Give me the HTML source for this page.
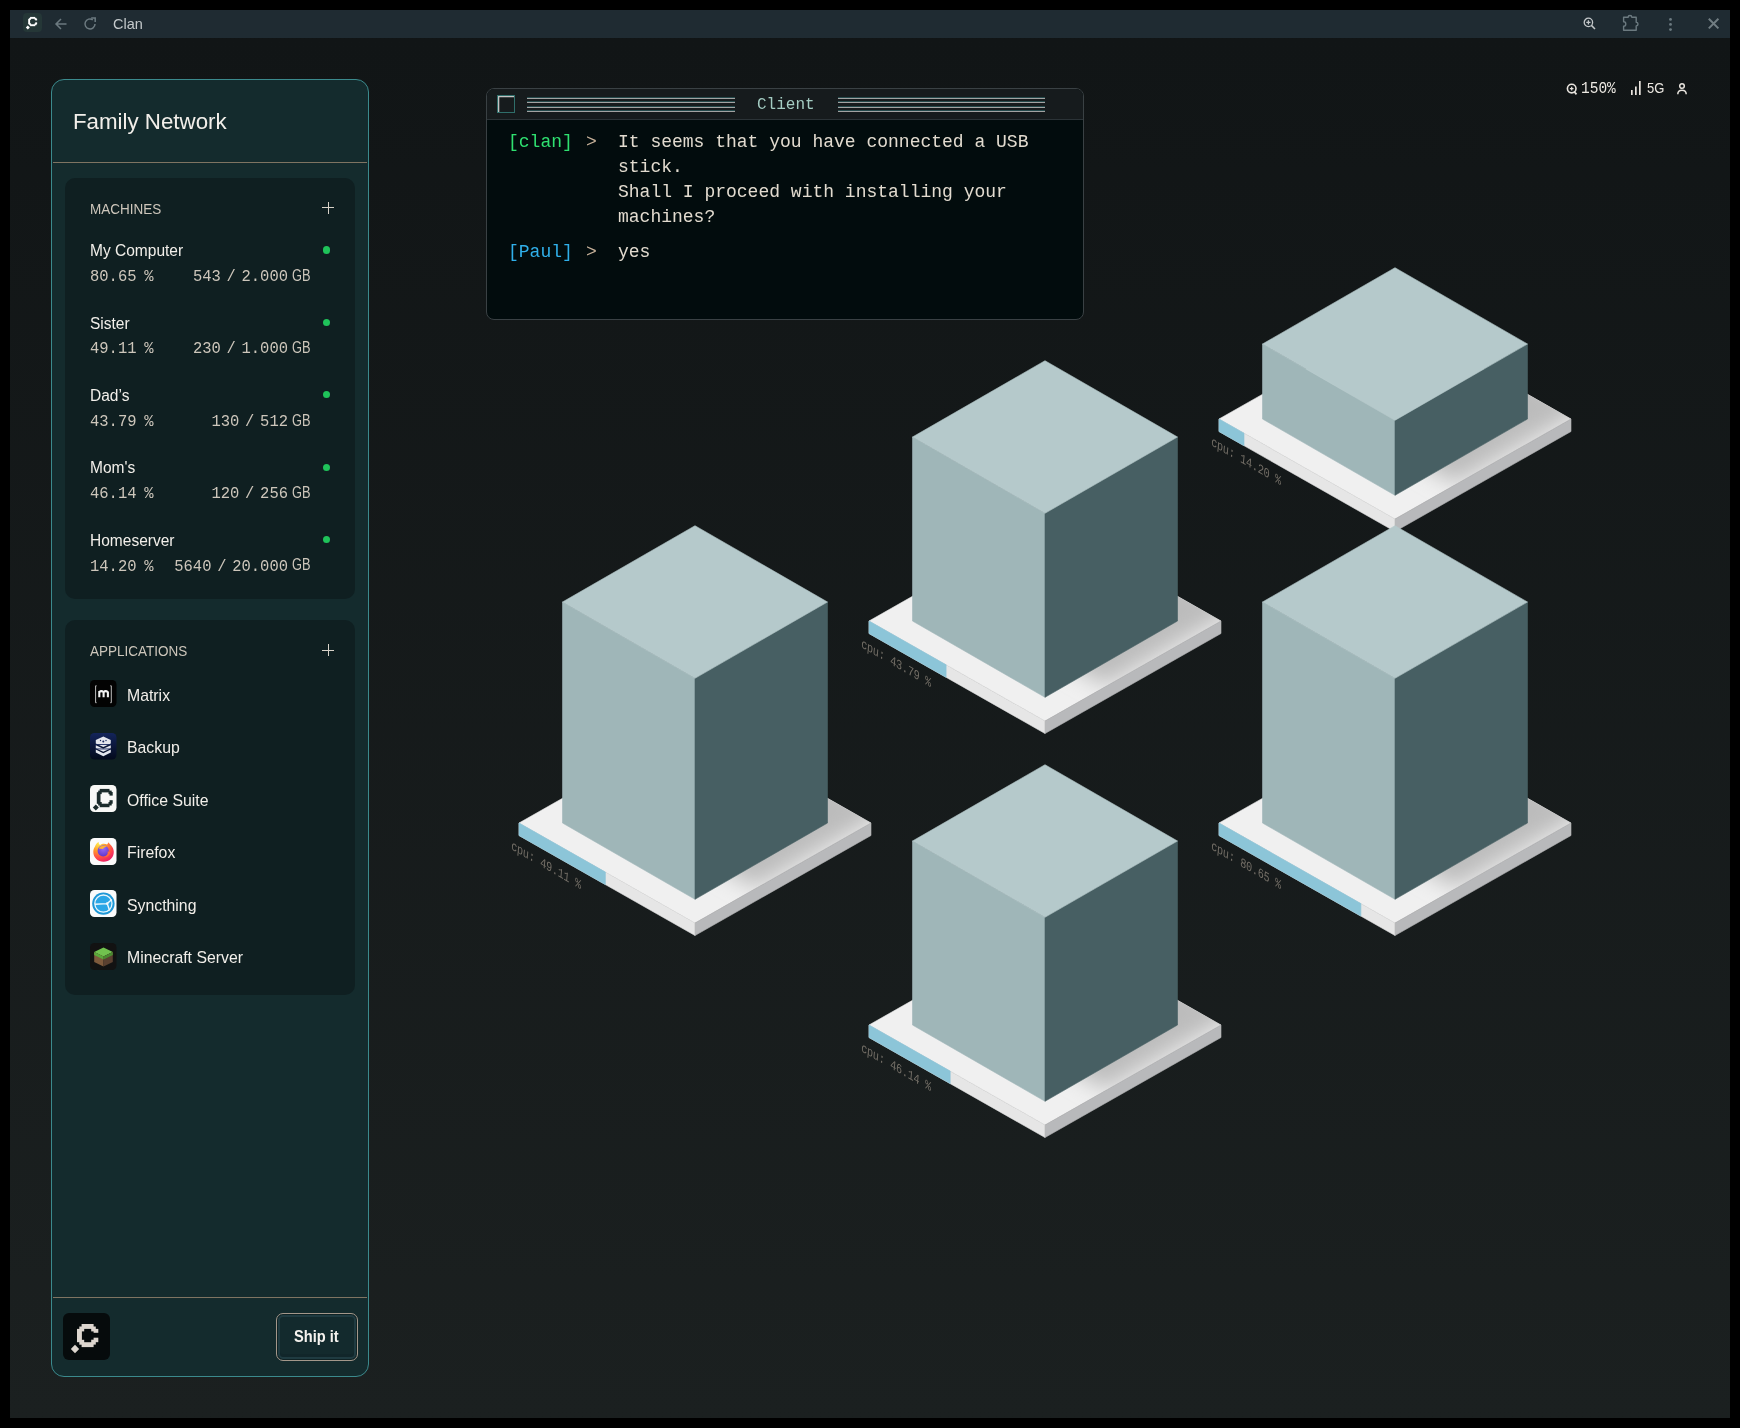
<!DOCTYPE html>
<html><head><meta charset="utf-8">
<style>
*{box-sizing:border-box;margin:0;padding:0}
html,body{width:1740px;height:1428px;overflow:hidden;background:#000;-webkit-font-smoothing:antialiased;font-family:"Liberation Sans",sans-serif}
.abs{position:absolute}
#win{position:absolute;will-change:transform;left:10px;top:10px;width:1720px;height:1408px;background:linear-gradient(#101415 0,#111516 30px,#1b2020 1408px);overflow:hidden}
#tb{position:absolute;left:0;top:0;width:1720px;height:28px;background:#1f2b32}
.mono{font-family:"Liberation Mono",monospace}
#side{position:absolute;left:41px;top:69px;width:318px;height:1298px;background:#142b2d;border:1px solid #3b8a8d;border-radius:13px}
.card{position:absolute;left:13px;width:290px;background:#0f1f21;border-radius:10px}
.t{position:absolute;white-space:nowrap;line-height:1}
.nm{font-size:16px;color:#f2efea;transform:scaleX(0.97);transform-origin:0 0}
.num{font-size:15.5px;color:#cdc6bb;transform:scaleY(1.06);transform-origin:0 100%}
.gb{font-size:16px;color:#cdc6bb;transform:scaleX(0.8);transform-origin:0 0}
.dot{position:absolute;width:7.2px;height:7.2px;border-radius:50%;background:#1fc35a}
.ico{position:absolute;width:27px;height:27px}
.ico svg{display:block}
.sec{font-size:15px;color:#cdc6bb;transform:scaleX(0.9);transform-origin:0 0}
.an{font-size:17px;transform:scaleX(0.93)}
.plus{position:absolute;width:12px;height:12px}
.plus:before,.plus:after{content:"";position:absolute;background:#d8d2c8}
.plus:before{left:5.5px;top:0;width:1.3px;height:12px}
.plus:after{left:0;top:5.5px;width:12px;height:1.3px}
#term{position:absolute;left:476px;top:78px;width:598px;height:231.5px;background:#020c0d;border:1.6px solid #3a4144;border-radius:8px;overflow:hidden}
#termtb{position:absolute;left:0;top:0;width:100%;height:31px;background:#161b1d;border-bottom:1.5px solid #2b3337}
.stripes{position:absolute;top:7.8px;height:16px;background:linear-gradient(#24494b 0,#24494b 1px,#a2a2a2 1px,#a2a2a2 2.2px,transparent 2.2px,transparent 4.1px,#24494b 4.1px,#24494b 5.1px,#a2a2a2 5.1px,#a2a2a2 6.3px,transparent 6.3px,transparent 9.1px,#24494b 9.1px,#24494b 10.1px,#a2a2a2 10.1px,#a2a2a2 11.3px,transparent 11.3px,transparent 13.1px,#24494b 13.1px,#24494b 14.1px,#a2a2a2 14.1px,#a2a2a2 15.3px,transparent 15.3px)}
.tl{position:absolute;font-family:"Liberation Mono",monospace;font-size:18px;line-height:25px;white-space:pre;color:#e2dbcf}
</style></head><body>
<div id="win">
  <div id="tb">
    <div class="abs" style="left:13px;top:3px;width:18.5px;height:18.5px;background:#253737;border-radius:4px"></div>
    <svg class="abs" style="left:15px;top:5px" width="15" height="15" viewBox="0 0 47 47"><g fill="#fff"><rect x="16" y="6" width="16" height="6"/><rect x="16" y="29" width="16" height="6"/><rect x="10" y="12" width="6" height="17"/><rect x="13" y="9" width="6" height="6"/><rect x="13" y="26" width="6" height="6"/><rect x="30" y="9" width="6" height="6"/><rect x="32" y="12" width="6" height="5"/><rect x="30" y="26" width="6" height="6"/><rect x="32" y="23" width="6" height="6"/><path d="M8.8 33L15 39.2 8.8 45.4 2.6 39.2z"/></g></svg>
    <svg class="abs" style="left:44px;top:7px" width="14" height="14" viewBox="0 0 14 14"><path d="M12.5 7H2M7 2L2 7l5 5" stroke="#6c7a80" stroke-width="1.5" fill="none"/></svg>
    <svg class="abs" style="left:73px;top:7px" width="14" height="14" viewBox="0 0 14 14"><path d="M12 7A5 5 0 1 1 9.8 2.8" stroke="#6c7a80" stroke-width="1.5" fill="none"/><path d="M8.2 1h4v4" stroke="#6c7a80" stroke-width="1.5" fill="none"/></svg>
    <div class="t" style="left:103px;top:6.8px;font-size:14.5px;color:#c4c9cb">Clan</div>
    <svg class="abs" style="left:1573px;top:7px" width="14" height="14" viewBox="0 0 14 14"><circle cx="5.4" cy="5.4" r="4.2" stroke="#c4c8ca" stroke-width="1.3" fill="none"/><path d="M8.4 8.4l3.6 3.6" stroke="#c4c8ca" stroke-width="1.5"/><path d="M5.4 3.3v4.2M3.3 5.4h4.2" stroke="#c4c8ca" stroke-width="1.3"/></svg>
    <svg class="abs" style="left:1611px;top:4px" width="20" height="18" viewBox="0 0 20 18"><path d="M2.6 3.3H7.2A1.8 1.8 0 0 1 10.8 3.3H15.2V8.3A1.8 1.8 0 0 1 15.2 11.9V16.3H2.6V12.2A2.2 2.2 0 0 0 2.6 7.8z" stroke="#6c7a80" stroke-width="1.4" fill="none" stroke-linejoin="round"/></svg>
    <svg class="abs" style="left:1657px;top:7px" width="8" height="16" viewBox="0 0 8 16"><circle cx="3.5" cy="2.4" r="1.4" fill="#6c7a80"/><circle cx="3.5" cy="7.4" r="1.4" fill="#6c7a80"/><circle cx="3.5" cy="12.6" r="1.4" fill="#6c7a80"/></svg>
    <svg class="abs" style="left:1697px;top:7px" width="14" height="14" viewBox="0 0 14 14"><path d="M1.8 1.8l9.6 9.6M11.4 1.8l-9.6 9.6" stroke="#717d82" stroke-width="2"/></svg>
  </div>

  <!-- status -->
  <svg class="abs" style="left:1555.8px;top:73px" width="13" height="13" viewBox="0 0 13 13"><circle cx="5.7" cy="5.6" r="4.3" stroke="#e8e4de" stroke-width="1.6" fill="none"/><path d="M8 8.5l2.5 2.8" stroke="#e8e4de" stroke-width="1.8"/><path d="M5.7 3.8v3.6M3.9 5.6h3.6" stroke="#e8e4de" stroke-width="1.2"/></svg>
  <div class="t mono" style="left:1571px;top:70.5px;font-size:14.5px;color:#ece8e2;transform:scaleY(1.08);transform-origin:0 0">150%</div>
  <svg class="abs" style="left:1620px;top:70px" width="12" height="16" viewBox="0 0 12 16"><rect x="1" y="10" width="1.7" height="5" fill="#e8e4de"/><rect x="5" y="6.5" width="1.7" height="8.5" fill="#e8e4de"/><rect x="9" y="1" width="1.7" height="14" fill="#e8e4de"/></svg>
  <div class="t" style="left:1637px;top:69.8px;font-size:15.5px;color:#ece8e2;transform:scaleX(0.84);transform-origin:0 0">5G</div>
  <svg class="abs" style="left:1666px;top:72px" width="12" height="13" viewBox="0 0 12 13"><circle cx="6" cy="4" r="2.3" stroke="#e8e4de" stroke-width="1.5" fill="none"/><path d="M1.8 12.2q0-4 4.2-4t4.2 4" stroke="#e8e4de" stroke-width="1.5" fill="none"/></svg>

  <div id="side">
    <div class="t" style="left:21px;top:30.7px;font-size:22.3px;color:#f2efea">Family Network</div>
    <div class="abs" style="left:1px;top:82px;width:314px;height:1px;background:#7f7462"></div>
    <div class="card" style="top:98px;height:421px">
    </div>
    <div class="t sec" style="left:38px;top:120.5px">MACHINES</div>
    <div class="plus" style="left:270px;top:121.5px"></div>
<div class="t nm" style="left:38px;top:163.2px">My Computer</div>
<div class="t num mono" style="left:38px;top:189.9px;word-spacing:-1.6px">80.65 %</div>
<div class="t num mono" style="right:80px;top:189.9px;word-spacing:-3.6px">543 / 2.000</div>
<div class="t gb" style="left:240px;top:187.7px">GB</div>
<div class="dot" style="left:270.8px;top:166.4px"></div>
<div class="t nm" style="left:38px;top:235.6px">Sister</div>
<div class="t num mono" style="left:38px;top:262.3px;word-spacing:-1.6px">49.11 %</div>
<div class="t num mono" style="right:80px;top:262.3px;word-spacing:-3.6px">230 / 1.000</div>
<div class="t gb" style="left:240px;top:260.1px">GB</div>
<div class="dot" style="left:270.8px;top:238.8px"></div>
<div class="t nm" style="left:38px;top:308.0px">Dad’s</div>
<div class="t num mono" style="left:38px;top:334.7px;word-spacing:-1.6px">43.79 %</div>
<div class="t num mono" style="right:80px;top:334.7px;word-spacing:-3.6px">130 / 512</div>
<div class="t gb" style="left:240px;top:332.5px">GB</div>
<div class="dot" style="left:270.8px;top:311.2px"></div>
<div class="t nm" style="left:38px;top:380.4px">Mom's</div>
<div class="t num mono" style="left:38px;top:407.1px;word-spacing:-1.6px">46.14 %</div>
<div class="t num mono" style="right:80px;top:407.1px;word-spacing:-3.6px">120 / 256</div>
<div class="t gb" style="left:240px;top:404.9px">GB</div>
<div class="dot" style="left:270.8px;top:383.6px"></div>
<div class="t nm" style="left:38px;top:452.8px">Homeserver</div>
<div class="t num mono" style="left:38px;top:479.5px;word-spacing:-1.6px">14.20 %</div>
<div class="t num mono" style="right:80px;top:479.5px;word-spacing:-3.6px">5640 / 20.000</div>
<div class="t gb" style="left:240px;top:477.3px">GB</div>
<div class="dot" style="left:270.8px;top:456.0px"></div>
    <div class="card" style="top:540px;height:375px"></div>
    <div class="t sec" style="left:38px;top:562.5px">APPLICATIONS</div>
    <div class="plus" style="left:270px;top:564px"></div>
<div class="ico" style="left:38px;top:600.1px"><svg width="27" height="27" viewBox="0 0 27 27"><rect x="0" y="0" width="26.5" height="27" rx="4.5" fill="#030303"/><path d="M6.6 5.8h-1v16.9h1M20.3 5.8h1v16.9h-1" stroke="#bdbdbd" stroke-width="1" fill="none"/><path d="M9.3 17.3V10.9M9.3 12.2q2-2 4.3 0V17.3M13.6 12.2q2-2 4.3 0V17.3" stroke="#f2f2f2" stroke-width="2.1" fill="none"/></svg></div>
<div class="t nm an" style="left:75px;top:606.5px">Matrix</div>
<div class="ico" style="left:38px;top:652.6px"><svg width="27" height="27" viewBox="0 0 27 27"><defs><linearGradient id="bg1" x1="0" y1="0" x2="0" y2="1"><stop offset="0" stop-color="#13245a"/><stop offset="1" stop-color="#040a1c"/></linearGradient></defs><rect width="26.5" height="26.5" rx="4.5" fill="url(#bg1)"/><g fill="#e4e6ee"><path d="M13.3 3.5l7.5 3.6v3.3l-7.5 3.6-7.5-3.6V7.1z"/><path d="M5.8 12.2l7.5 3.6 7.5-3.6v3l-7.5 3.6-7.5-3.6z"/><path d="M5.8 16.6l7.5 3.6 7.5-3.6v3l-7.5 3.6-7.5-3.6z"/></g><g fill="#1a2a60"><circle cx="13.3" cy="8.6" r="1"/><circle cx="10.5" cy="7.5" r="0.7"/><circle cx="16" cy="7.5" r="0.7"/><rect x="5.8" y="11.1" width="15" height="0.9"/><rect x="5.8" y="15.5" width="15" height="0.9"/></g></svg></div>
<div class="t nm an" style="left:75px;top:659.0px">Backup</div>
<div class="ico" style="left:38px;top:705.1px"><svg width="27" height="27" viewBox="0 0 27 27"><rect width="26.5" height="27" rx="4.5" fill="#f8f8f6"/><g fill="#1b2b2b"><rect x="9.7" y="3.9" width="9.8" height="3.5"/><rect x="9.7" y="18.7" width="9.8" height="3.5"/><rect x="6.8" y="7.2" width="3.7" height="11.6"/><rect x="8.2" y="5.6" width="3.5" height="3.5"/><rect x="8.2" y="17" width="3.5" height="3.5"/><rect x="18.5" y="5.6" width="3.2" height="3.5"/><rect x="19.5" y="7" width="3.2" height="3.6"/><rect x="18.5" y="17" width="3.2" height="3.5"/><rect x="19.5" y="15.2" width="3.2" height="3.5"/><path d="M5.8 25.6l3-3.1-3-3.1-3 3.1z"/></g></svg></div>
<div class="t nm an" style="left:75px;top:711.5px">Office Suite</div>
<div class="ico" style="left:38px;top:757.6px"><svg width="27" height="27" viewBox="0 0 27 27"><defs><radialGradient id="ff1" cx="0.25" cy="0.1" r="1"><stop offset="0" stop-color="#ffe84a"/><stop offset="0.35" stop-color="#ff9a2a"/><stop offset="0.7" stop-color="#ff4a4a"/><stop offset="1" stop-color="#e8186a"/></radialGradient><radialGradient id="ff2" cx="0.5" cy="0.3" r="0.8"><stop offset="0" stop-color="#9a6af4"/><stop offset="1" stop-color="#5a30c8"/></radialGradient></defs><rect width="26.5" height="27" rx="4.5" fill="#fbfbfb"/><path d="M5 8.5c.8-2 2-3.6 3.6-4.5 0 1.5.6 2.5 1.5 3 1.8-1.5 4.6-1.8 7-.6l1.6-2.2c.4 1.3 1.6 2.2 2.5 3.2 1.6 1.8 2.6 4 2.6 6.6 0 5.6-4.5 9.8-10.2 9.8S3.3 19.6 3.3 14c0-2 .6-4 1.7-5.5z" fill="url(#ff1)"/><circle cx="13.2" cy="12.8" r="5.6" fill="url(#ff2)"/><path d="M8.6 10.6c1.5-3 5.5-4 8.4-1.5-1.8 0-3.4.6-4 1.8z" fill="#ffb030"/><path d="M17.6 13.5c.6 2.6-.8 5-3.6 5.6 3.2.6 6.2-1.8 6.3-5z" fill="#ff6a3a"/></svg></div>
<div class="t nm an" style="left:75px;top:764.0px">Firefox</div>
<div class="ico" style="left:38px;top:810.1px"><svg width="27" height="27" viewBox="0 0 27 27"><rect width="26.5" height="27" rx="4.5" fill="#fbfbfb"/><circle cx="13.4" cy="13.6" r="11.2" fill="#1e97d6"/><circle cx="13.4" cy="13.6" r="8.6" fill="#2aa6e6" stroke="#e8f6fc" stroke-width="1.3"/><path d="M4.9 14.2L17.2 13.6 21.8 9.5M17.2 13.6L19.6 20.6" stroke="#eef8fd" stroke-width="1.4" fill="none"/><circle cx="17.2" cy="13.6" r="1.3" fill="#eef8fd"/></svg></div>
<div class="t nm an" style="left:75px;top:816.5px">Syncthing</div>
<div class="ico" style="left:38px;top:862.6px"><svg width="27" height="27" viewBox="0 0 27 27"><rect width="26.5" height="27" rx="4.5" fill="#121212"/><path d="M13.5 4.5l9.3 4.4-9.3 4.6-9.3-4.6z" fill="#71c24e"/><path d="M4.2 8.9l9.3 4.6v10l-9.3-4.6z" fill="#7e5a3c"/><path d="M22.8 8.9l-9.3 4.6v10l9.3-4.6z" fill="#5a4030"/><path d="M4.2 8.9l9.3 4.6v3l-9.3-4.6z" fill="#5aa83a"/><path d="M22.8 8.9l-9.3 4.6v3l9.3-4.6z" fill="#4a8a30"/></svg></div>
<div class="t nm an" style="left:75px;top:869.0px">Minecraft Server</div>
    <div class="abs" style="left:1px;top:1217px;width:314px;height:1px;background:#7f7462"></div>
    <div class="abs" style="left:11px;top:1233px"><svg width="47" height="47" viewBox="0 0 47 47"><rect width="47" height="47" rx="6" fill="#060b0c"/><g fill="#ddd6cf">
<rect x="18.6" y="11" width="12" height="4.9"/><rect x="18.6" y="29.2" width="12" height="4.9"/><rect x="14" y="15.9" width="4.9" height="13.3"/>
<rect x="16.3" y="13.5" width="4.9" height="4.9"/><rect x="16.3" y="26.8" width="4.9" height="4.9"/>
<rect x="28.2" y="13.5" width="4.6" height="4.9"/><rect x="30.6" y="15.9" width="4.7" height="3.9"/>
<rect x="28.2" y="26.7" width="4.6" height="4.9"/><rect x="30.6" y="24.7" width="4.7" height="4.5"/>
<path d="M12 31.8L16.2 36 12 40.2 7.8 36z"/></g></svg></div>
    <div class="abs" style="left:224px;top:1233px;width:82px;height:48px;border:1.3px solid #a3978a;border-radius:7px;background:#132a2d;box-shadow:inset 0 0 0 1px #0f2224,inset 0 0 0 3px #1f3b41,inset 0 -3px 0 3px #11262a"></div>
    <div class="t" style="left:242px;top:1248px;font-size:17px;font-weight:bold;color:#f5f2ee;transform:scaleX(0.86);transform-origin:0 0">Ship it</div>
  </div>

  <div id="term">
    <div id="termtb">
      <div class="abs" style="left:9.7px;top:5.5px;width:18px;height:18px;border:1.2px solid #2f6e6a;box-shadow:inset 1.3px 1.3px 0 #c4c4c4"></div>
      <div class="stripes" style="left:39.5px;width:208px"></div>
      <div class="stripes" style="left:351px;width:207px"></div>
      <div class="t mono" style="left:270px;top:8px;font-size:16px;color:#a4cdc3">Client</div>
    </div>
    <div class="tl" style="left:21px;top:41px;color:#2fe070">[clan]</div>
    <div class="tl" style="left:99px;top:41px;color:#c9b39b">&gt;</div>
    <div class="tl" style="left:131px;top:41px">It seems that you have connected a USB
stick.
Shall I proceed with installing your
machines?</div>
    <div class="tl" style="left:21px;top:151px;color:#30b0ea">[Paul]</div>
    <div class="tl" style="left:99px;top:151px;color:#c9b39b">&gt;</div>
    <div class="tl" style="left:131px;top:151px">yes</div>
  </div>
</div>
<svg class="abs" style="left:0;top:0" width="1740" height="1428" viewBox="0 0 1740 1428">
<defs><filter id="blur" x="-50%" y="-50%" width="200%" height="200%"><feGaussianBlur stdDeviation="11"/></filter>
<clipPath id="cp0"><polygon points="1219.0,419.0 1395.0,319.0 1571.0,419.0 1395.0,519.0"/></clipPath>
<clipPath id="cp1"><polygon points="869.0,621.0 1045.0,521.0 1221.0,621.0 1045.0,721.0"/></clipPath>
<clipPath id="cp2"><polygon points="519.0,823.0 695.0,723.0 871.0,823.0 695.0,923.0"/></clipPath>
<clipPath id="cp3"><polygon points="1219.0,823.0 1395.0,723.0 1571.0,823.0 1395.0,923.0"/></clipPath>
<clipPath id="cp4"><polygon points="869.0,1025.0 1045.0,925.0 1221.0,1025.0 1045.0,1125.0"/></clipPath>
</defs>
<g stroke-width="0.6"><polygon points="1219.0,419.0 1395.0,319.0 1571.0,419.0 1395.0,519.0" fill="#f0f0f0" stroke="#f0f0f0"/><g clip-path="url(#cp0)"><polygon points="1455.0,330.7 1587.5,407.0 1455.0,483.3 1322.5,407.0" fill="#bcbcbc" filter="url(#blur)"/></g><polygon points="1219.0,419.0 1395.0,519.0 1395.0,531.5 1219.0,431.5" fill="#e6e6e6" stroke="#e6e6e6"/><polygon points="1219.0,419.0 1244.0,433.2 1244.0,445.7 1219.0,431.5" fill="#8cc5d8" stroke="#8cc5d8"/><polygon points="1395.0,519.0 1571.0,419.0 1571.0,431.5 1395.0,531.5" fill="#b8b9bb" stroke="#b8b9bb"/><polygon points="1262.5,344.0 1395.0,420.3 1395.0,495.3 1262.5,419.0" fill="#9fb6b8" stroke="#9fb6b8"/><polygon points="1395.0,420.3 1527.5,344.0 1527.5,419.0 1395.0,495.3" fill="#475f63" stroke="#475f63"/><polygon points="1395.0,267.7 1527.5,344.0 1395.0,420.3 1262.5,344.0" fill="#b5c9cb" stroke="#b5c9cb"/><text transform="matrix(0.866 0.5 -0.1 1.12 1211.0 445.0)" font-family="Liberation Mono" font-size="11.6" fill="#736e66" letter-spacing="-0.25">cpu: 14.20 %</text></g>
<g stroke-width="0.6"><polygon points="869.0,621.0 1045.0,521.0 1221.0,621.0 1045.0,721.0" fill="#f0f0f0" stroke="#f0f0f0"/><g clip-path="url(#cp1)"><polygon points="1105.0,532.7 1237.5,609.0 1105.0,685.3 972.5,609.0" fill="#bcbcbc" filter="url(#blur)"/></g><polygon points="869.0,621.0 1045.0,721.0 1045.0,733.5 869.0,633.5" fill="#e6e6e6" stroke="#e6e6e6"/><polygon points="869.0,621.0 946.1,664.8 946.1,677.3 869.0,633.5" fill="#8cc5d8" stroke="#8cc5d8"/><polygon points="1045.0,721.0 1221.0,621.0 1221.0,633.5 1045.0,733.5" fill="#b8b9bb" stroke="#b8b9bb"/><polygon points="912.5,437.0 1045.0,513.3 1045.0,697.3 912.5,621.0" fill="#9fb6b8" stroke="#9fb6b8"/><polygon points="1045.0,513.3 1177.5,437.0 1177.5,621.0 1045.0,697.3" fill="#475f63" stroke="#475f63"/><polygon points="1045.0,360.7 1177.5,437.0 1045.0,513.3 912.5,437.0" fill="#b5c9cb" stroke="#b5c9cb"/><text transform="matrix(0.866 0.5 -0.1 1.12 861.0 647.0)" font-family="Liberation Mono" font-size="11.6" fill="#736e66" letter-spacing="-0.25">cpu: 43.79 %</text></g>
<g stroke-width="0.6"><polygon points="519.0,823.0 695.0,723.0 871.0,823.0 695.0,923.0" fill="#f0f0f0" stroke="#f0f0f0"/><g clip-path="url(#cp2)"><polygon points="755.0,734.7 887.5,811.0 755.0,887.3 622.5,811.0" fill="#bcbcbc" filter="url(#blur)"/></g><polygon points="519.0,823.0 695.0,923.0 695.0,935.5 519.0,835.5" fill="#e6e6e6" stroke="#e6e6e6"/><polygon points="519.0,823.0 605.4,872.1 605.4,884.6 519.0,835.5" fill="#8cc5d8" stroke="#8cc5d8"/><polygon points="695.0,923.0 871.0,823.0 871.0,835.5 695.0,935.5" fill="#b8b9bb" stroke="#b8b9bb"/><polygon points="562.5,602.0 695.0,678.3 695.0,899.3 562.5,823.0" fill="#9fb6b8" stroke="#9fb6b8"/><polygon points="695.0,678.3 827.5,602.0 827.5,823.0 695.0,899.3" fill="#475f63" stroke="#475f63"/><polygon points="695.0,525.7 827.5,602.0 695.0,678.3 562.5,602.0" fill="#b5c9cb" stroke="#b5c9cb"/><text transform="matrix(0.866 0.5 -0.1 1.12 511.0 849.0)" font-family="Liberation Mono" font-size="11.6" fill="#736e66" letter-spacing="-0.25">cpu: 49.11 %</text></g>
<g stroke-width="0.6"><polygon points="1219.0,823.0 1395.0,723.0 1571.0,823.0 1395.0,923.0" fill="#f0f0f0" stroke="#f0f0f0"/><g clip-path="url(#cp3)"><polygon points="1455.0,734.7 1587.5,811.0 1455.0,887.3 1322.5,811.0" fill="#bcbcbc" filter="url(#blur)"/></g><polygon points="1219.0,823.0 1395.0,923.0 1395.0,935.5 1219.0,835.5" fill="#e6e6e6" stroke="#e6e6e6"/><polygon points="1219.0,823.0 1360.9,903.6 1360.9,916.1 1219.0,835.5" fill="#8cc5d8" stroke="#8cc5d8"/><polygon points="1395.0,923.0 1571.0,823.0 1571.0,835.5 1395.0,935.5" fill="#b8b9bb" stroke="#b8b9bb"/><polygon points="1262.5,602.0 1395.0,678.3 1395.0,899.3 1262.5,823.0" fill="#9fb6b8" stroke="#9fb6b8"/><polygon points="1395.0,678.3 1527.5,602.0 1527.5,823.0 1395.0,899.3" fill="#475f63" stroke="#475f63"/><polygon points="1395.0,525.7 1527.5,602.0 1395.0,678.3 1262.5,602.0" fill="#b5c9cb" stroke="#b5c9cb"/><text transform="matrix(0.866 0.5 -0.1 1.12 1211.0 849.0)" font-family="Liberation Mono" font-size="11.6" fill="#736e66" letter-spacing="-0.25">cpu: 80.65 %</text></g>
<g stroke-width="0.6"><polygon points="869.0,1025.0 1045.0,925.0 1221.0,1025.0 1045.0,1125.0" fill="#f0f0f0" stroke="#f0f0f0"/><g clip-path="url(#cp4)"><polygon points="1105.0,936.7 1237.5,1013.0 1105.0,1089.3 972.5,1013.0" fill="#bcbcbc" filter="url(#blur)"/></g><polygon points="869.0,1025.0 1045.0,1125.0 1045.0,1137.5 869.0,1037.5" fill="#e6e6e6" stroke="#e6e6e6"/><polygon points="869.0,1025.0 950.2,1071.1 950.2,1083.6 869.0,1037.5" fill="#8cc5d8" stroke="#8cc5d8"/><polygon points="1045.0,1125.0 1221.0,1025.0 1221.0,1037.5 1045.0,1137.5" fill="#b8b9bb" stroke="#b8b9bb"/><polygon points="912.5,841.0 1045.0,917.3 1045.0,1101.3 912.5,1025.0" fill="#9fb6b8" stroke="#9fb6b8"/><polygon points="1045.0,917.3 1177.5,841.0 1177.5,1025.0 1045.0,1101.3" fill="#475f63" stroke="#475f63"/><polygon points="1045.0,764.7 1177.5,841.0 1045.0,917.3 912.5,841.0" fill="#b5c9cb" stroke="#b5c9cb"/><text transform="matrix(0.866 0.5 -0.1 1.12 861.0 1051.0)" font-family="Liberation Mono" font-size="11.6" fill="#736e66" letter-spacing="-0.25">cpu: 46.14 %</text></g>
</svg>
</body></html>
